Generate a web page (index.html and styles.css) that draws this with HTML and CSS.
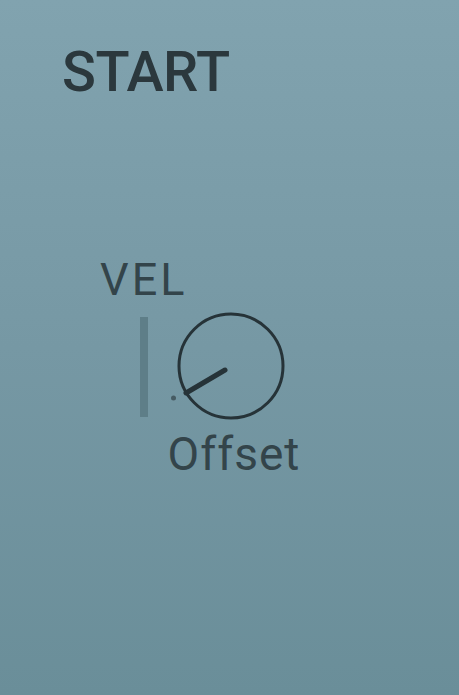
FILE: index.html
```html
<!DOCTYPE html>
<html>
<head>
  <title>Start</title>
  <link rel="stylesheet" href="styles.css">
</head>
<body>
  <div class="panel">
    <h1 class="title">START</h1>

    <div class="module">
      <div class="module-label">VEL</div>
      <div class="module-body">
        <div class="meter"></div>
        <div class="knob-wrap">
          <svg class="knob" width="112" height="112" viewBox="0 0 112 112">
            <circle cx="56" cy="56" r="52" fill="none" stroke="#263338" stroke-width="3"/>
            <line x1="50" y1="60" x2="11" y2="83" stroke="#263338" stroke-width="5" stroke-linecap="round"/>
            <circle cx="-1.5" cy="88" r="2.5" fill="#3b4c52" opacity="0.8"/>
          </svg>
          <div class="knob-caption">Offset</div>
        </div>
      </div>
    </div>
  </div>
</body>
</html>
```

FILE: styles.css
```css
html, body {
  margin: 0;
  height: 100%;
}

body {
  background: linear-gradient(180deg, #81a3af 0%, #7698a4 50%, #6a8e99 100%);
  font-family: Roboto, "Liberation Sans", sans-serif;
  color: #2b383d;
}

.panel {
  padding: 44px 0 0 62px;
}

.title {
  margin: 0;
  font-size: 56px;
  font-weight: 500;
  line-height: 1;
  letter-spacing: -0.5px;
}

.module {
  margin: 157px 0 0 38px;
}

.module-label {
  font-size: 45px;
  line-height: 1;
  letter-spacing: 3px;
  color: #33444a;
}

.module-body {
  display: flex;
  margin-top: 8px;
}

.meter {
  width: 8px;
  height: 100px;
  margin: 7px 0 0 40px;
  background: #5e7e88;
}

/* knob column is as wide as the dial; the caption spills out evenly */
.knob-wrap {
  width: 112px;
  display: flex;
  flex-direction: column;
  align-items: center;
  margin-left: 27px;
}

.knob {
  display: block;
  overflow: visible;
}

.knob-caption {
  margin-top: 9px;
  font-size: 46px;
  line-height: 1;
  letter-spacing: 1px;
  color: #33444a;
  padding-left: 6px;
  white-space: nowrap;
}
```
